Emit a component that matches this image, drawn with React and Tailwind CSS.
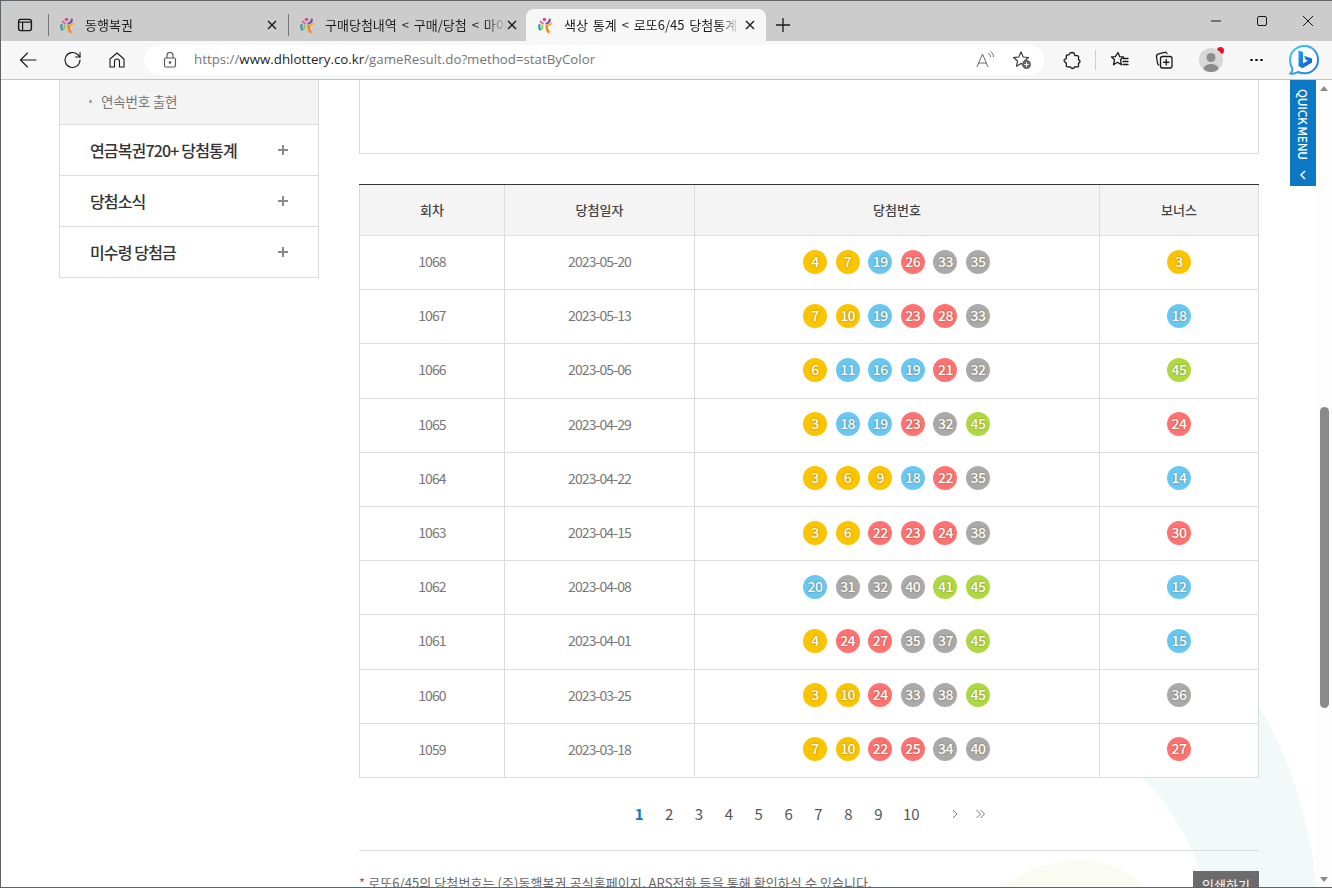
const KR = "font-['Noto_Sans_CJK_KR','Noto_Sans',sans-serif]";

const rows = [
  [1068, "2023-05-20", [4, 7, 19, 26, 33, 35], 3],
  [1067, "2023-05-13", [7, 10, 19, 23, 28, 33], 18],
  [1066, "2023-05-06", [6, 11, 16, 19, 21, 32], 45],
  [1065, "2023-04-29", [3, 18, 19, 23, 32, 45], 24],
  [1064, "2023-04-22", [3, 6, 9, 18, 22, 35], 14],
  [1063, "2023-04-15", [3, 6, 22, 23, 24, 38], 30],
  [1062, "2023-04-08", [20, 31, 32, 40, 41, 45], 12],
  [1061, "2023-04-01", [4, 24, 27, 35, 37, 45], 15],
  [1060, "2023-03-25", [3, 10, 24, 33, 38, 45], 36],
  [1059, "2023-03-18", [7, 10, 22, 25, 34, 40], 27],
];

function ballColor(n) {
  if (n <= 10) return "bg-[#fbc400]";
  if (n <= 20) return "bg-[#69c8f2]";
  if (n <= 30) return "bg-[#ff7272]";
  if (n <= 40) return "bg-[#aaaaaa]";
  return "bg-[#b0d840]";
}

function Ball({ n }) {
  return (
    <span className={`flex h-6 w-6 items-center justify-center rounded-full pb-px text-[14px] font-medium tracking-[-0.5px] text-white [text-shadow:0_0_2px_rgba(73,57,0,.6)] ${ballColor(n)}`}>
      {n}
    </span>
  );
}

function Favicon() {
  return (
    <svg width="18" height="18" viewBox="0 0 18 18" fill="none" strokeLinecap="round" className="shrink-0">
      <circle cx="7.500" cy="3.500" r="1.800" fill="#e8468f" />
      <path d="M3.500 5.500C4.500 6.500 5 7 6 7.500" stroke="#ec5fa0" strokeWidth="1.800" />
      <path d="M2.500 9C1.800 10.500 2 12 3 13.500" stroke="#18a79c" strokeWidth="2.200" />
      <path d="M5.200 9.500C5.800 10.500 5.500 12 4.800 13" stroke="#8cc63f" strokeWidth="1.800" />
      <path d="M12.800 3.500C12.800 5.500 11.500 7 9.500 7.500" stroke="#7d4fb5" strokeWidth="2.200" />
      <path d="M14.500 7.500C13.500 8.500 12.500 9 11 9.500" stroke="#fbb81c" strokeWidth="2" />
      <path d="M9.500 10C9.500 12 10 14 11.500 16" stroke="#f58220" strokeWidth="2.300" />
    </svg>
  );
}

function TabClose() {
  return (
    <svg width="10" height="10" viewBox="0 0 10 10" stroke="#1a1a1a" strokeWidth="1.4" className="shrink-0">
      <path d="M1 1l8 8M9 1l-8 8" />
    </svg>
  );
}

function Tab({ title, active, className, textClass }) {
  return (
    <div className={`flex h-[32px] items-center ${className} ${active ? "rounded-t-lg bg-[#f7f7f7]" : ""}`}>
      <Favicon />
      <div className={`overflow-hidden whitespace-nowrap text-[13px] text-[#1f1f1f] [word-spacing:2px] [mask-image:linear-gradient(to_right,black_88%,transparent)] ${textClass}`}>{title}</div>
      <div className="ml-auto"><TabClose /></div>
    </div>
  );
}

function Icon({ children, w = 20, className = "" }) {
  return (
    <svg width={w} height={w} viewBox="0 0 20 20" fill="none" stroke="#1a1a1a" strokeWidth="1.100" strokeLinecap="round" strokeLinejoin="round" className={`shrink-0 ${className}`}>
      {children}
    </svg>
  );
}

function BingIcon() {
  return (
    <svg width="32" height="34" viewBox="0 0 32 34" fill="none">
      <defs>
        <linearGradient id="bingB" x1="0" y1="0" x2="1" y2="1">
          <stop offset="0" stopColor="#1fa9e8" />
          <stop offset="1" stopColor="#1450c8" />
        </linearGradient>
        <linearGradient id="bingRing" x1="0" y1="0" x2="1" y2="1">
          <stop offset="0" stopColor="#3fd0f5" />
          <stop offset="1" stopColor="#1f6fe0" />
        </linearGradient>
      </defs>
      <path d="M16.500 2C8.500 2 2 8 2 16c0 3 .8 6 2.500 9 .2 1.500-.6 3-2 4.500 3.500.5 6-.5 7.500-1.500 2 .9 4 1.300 6.500 1.300 7.800 0 13.500-6 13.500-13.500S24.500 2 16.500 2z" fill="#fff" stroke="url(#bingRing)" strokeWidth="2" />
      <path d="M10.500 6.500l4.500 1.600v11.400l4.800-2.800-2.300-1.100-1.500-3.800 8 2.800v4l-9.500 5.700-4-2.300V6.500z" fill="url(#bingB)" />
    </svg>
  );
}

function BrowserChrome() {
  return (
    <div className="shrink-0">
      <div className="flex h-[40px] items-end bg-[#cccccc]">
        <div className="flex h-[32px] w-[48px] items-center justify-between pl-[16px]">
          <Icon w={16}>
            <rect x="2" y="3" width="16" height="14" rx="2.500" strokeWidth="1.800" />
            <path d="M2 6.500h16M7 6.500V17" strokeWidth="1.500" />
          </Icon>
          <div className="h-[22px] w-px bg-[#777777]" />
        </div>
        <Tab title="동행복권" className="w-[239px] pl-[10px] pr-[11px]" textClass="ml-[8px] w-[170px]" />
        <div className="mb-[5px] h-[22px] w-px self-end bg-[#777777]" />
        <Tab title="구매당첨내역 < 구매/당첨 < 마이페이지" className="w-[237px] pl-[10px] pr-[9px]" textClass="ml-[8px] w-[183px]" />
        <Tab title="색상 통계 < 로또6/45 당첨통계 < 당첨결과" active className="w-[240px] pl-[11px] pr-[11px]" textClass="ml-[9px] w-[176px]" />
        <div className="ml-[9px] flex h-[32px] w-[16px] items-center justify-center">
          <svg width="16" height="16" viewBox="0 0 16 16" stroke="#1a1a1a" strokeWidth="1.300"><path d="M8 1v14M1 8h14" /></svg>
        </div>
        <div className="ml-auto flex h-full items-center gap-[34px] pr-[18px]">
          <svg width="12" height="12" viewBox="0 0 12 12" stroke="#1a1a1a" strokeWidth="1"><path d="M1 6h10" /></svg>
          <svg width="12" height="12" viewBox="0 0 12 12" fill="none" stroke="#1a1a1a" strokeWidth="1"><rect x="1.500" y="1.500" width="9" height="9" rx="1.500" /></svg>
          <svg width="12" height="12" viewBox="0 0 12 12" stroke="#1a1a1a" strokeWidth="1"><path d="M1 1l10 10M11 1L1 11" /></svg>
        </div>
      </div>
      <div className="flex h-[39px] items-center border-b border-[#c4c4c4] bg-[#f7f7f7]">
        <div className="ml-[17px] flex w-[126px] items-center gap-[25px]">
          <Icon><path d="M18 10H2.500M9.500 3l-7 7 7 7" /></Icon>
          <Icon>
            <path d="M17 10a7.500 7.500 0 1 1-2.400-5.500L17 7" />
            <path d="M17 2.500V7h-4.500" />
          </Icon>
          <Icon className="-ml-[1px]"><path d="M3 9l7-6 7 6v8h-4.500v-5.500a2.500 2.500 0 0 0-5 0V17H3z" /></Icon>
        </div>
        <div className="flex h-[30px] w-[900px] items-center rounded-full bg-white pl-[19px]">
          <svg width="14" height="16" viewBox="0 0 14 16" fill="none" stroke="#555" strokeWidth="1.100" className="shrink-0">
            <rect x="1.500" y="6" width="11" height="9" rx="1.500" />
            <path d="M4 6V3.500a3 3 0 0 1 6 0V6" />
            <circle cx="7" cy="10.500" r=".8" fill="#555" />
          </svg>
          <div className="ml-[17px] whitespace-nowrap font-['Open_Sans',sans-serif] text-[13.3px] text-[#767676]">
            https://<span className="text-[#1f1f1f]">www.dhlottery.co.kr</span>/gameResult.do?method=statByColor
          </div>
          <div className="ml-auto mr-[12px] flex items-center gap-[17px]">
            <svg width="20" height="20" viewBox="0 0 20 20" fill="none" stroke="#666" strokeWidth="1">
              <path d="M2 17L7.500 4 13 17M4 13h7" />
              <path d="M13 3c1.500 1 2.500 2 2.500 4M15.500 1.500c2 1.500 3 3 3 5.500" />
            </svg>
            <svg width="20" height="20" viewBox="0 0 20 20" fill="none">
              <path d="M9 2l2.200 5 5.300.5-4 3.500 1 5.200L9 13.500 4.500 16.200l1-5.200-4-3.500L6.800 7z" stroke="#333" strokeWidth="1.100" strokeLinejoin="round" />
              <circle cx="14.500" cy="14.500" r="4.500" fill="#666" />
              <path d="M14.500 12.300v4.400M12.300 14.500h4.400" stroke="#fff" strokeWidth="1.100" />
            </svg>
          </div>
        </div>
        <div className="ml-[18px] flex items-center">
          <Icon>
            <path strokeWidth="1.300" d="M7.500 4C8 2 12 2 12.500 4c.2.800 0 1.200.3 1.500.8.500 3.200-.3 3.700.7.500 1-.3 2.800 0 3.500.6.600 1.500.5 1.500 1.800s-1 1.300-1.500 1.800c-.3.800.5 2.500-.2 3.200-.8.800-2.500 0-3.300.3-.8.500-.7 1.700-2.500 1.700s-1.700-1.200-2.500-1.700c-.8-.3-2.800.5-3.500-.2-.6-.7.200-2.500-.2-3.200C3.700 12 2 12 2 10.500S3.700 9 4.300 8.500c.4-.7-.4-2.500.2-3.200C5.200 4.700 7 5.500 7.500 4z" />
          </Icon>
          <div className="ml-[13px] h-[20px] w-px bg-[#d0d0d0]" />
          <Icon className="ml-[14px]">
            <path strokeWidth="1.300" d="M8 2.500l1.700 4.200 3.800.3-3 2.800.9 5-3.900-2.500-4 2.500 1-5-3-2.800 3.800-.3z" />
            <path strokeWidth="1.300" d="M13.500 8.500H18M13 11.500h5M13 14.500h5" />
          </Icon>
          <Icon className="ml-[24px]">
            <path strokeWidth="1.300" d="M13 3.500c-.5-1-1.500-1.500-2.500-1.200l-6 1.500C3 4.300 2.300 5.500 2.500 7l1 6c.1.800.5 1.500 1.300 2" />
            <rect x="6.500" y="6.500" width="11.500" height="11.500" rx="2" strokeWidth="1.300" />
            <path strokeWidth="1.300" d="M12.250 9.500v5.500M9.500 12.250H15" />
          </Icon>
          <div className="relative ml-[25px] flex h-6 w-6 items-center justify-center overflow-hidden rounded-full bg-[#d8d8d8]">
            <svg width="24" height="24" viewBox="0 0 24 24" fill="#8c8c8c"><circle cx="12" cy="9.500" r="4.500" /><ellipse cx="12" cy="21" rx="7.500" ry="5" /></svg>
          </div>
          <div className="-ml-[6px] -mt-[20px] h-[7px] w-[7px] rounded-full bg-[#e81123]" />
          <div className="ml-[26px] flex w-[14px] items-center gap-[2px]">
            <span className="h-[2px] w-[3px] rounded-full bg-[#1a1a1a]" />
            <span className="h-[2px] w-[3px] rounded-full bg-[#1a1a1a]" />
            <span className="h-[2px] w-[3px] rounded-full bg-[#1a1a1a]" />
          </div>
          <div className="ml-[24px] mt-[2px]"><BingIcon /></div>
        </div>
      </div>
    </div>
  );
}

function Sidebar() {
  const items = ["연금복권720+ 당첨통계", "당첨소식", "미수령 당첨금"];
  return (
    <aside className="ml-[58px] w-[260px] shrink-0">
      <div className="border-x border-b border-[#dcdcdc]">
        <div className="flex h-[44px] items-center bg-[#f4f4f4] pb-px pl-[29px] text-[13.5px] tracking-[-0.2px] text-[#777777]">
          <span className="mr-[9px] h-[3px] w-[3px] bg-[#aaaaaa]" />
          연속번호 출현
        </div>
        {items.map((label) => (
          <div key={label} className="flex h-[51px] items-center justify-between border-t border-[#dcdcdc] px-[30px] text-[16px] font-medium tracking-[-0.85px] text-[#333333]">
            <span className="-mt-px">{label}</span>
            <svg width="10" height="10" viewBox="0 0 10 10" stroke="#8a8a8a" strokeWidth="2"><path d="M5 0v10M0 5h10" /></svg>
          </div>
        ))}
      </div>
    </aside>
  );
}

const cols = "grid grid-cols-[145px_190px_405px_1fr]";

function ResultTable() {
  return (
    <div className="mt-[30px] border-t border-[#333333] bg-white">
      <div className={`${cols} h-[51px] border-x border-b border-[#dcdcdc] bg-[#f4f4f4] text-[13px] font-medium text-[#444444]`}>
        {["회차", "당첨일자", "당첨번호", "보너스"].map((h, i) => (
          <div key={h} className={`flex items-center justify-center pb-px ${i < 3 ? "border-r border-[#dcdcdc]" : ""}`}>{h}</div>
        ))}
      </div>
      {rows.map(([round, date, nums, bonus]) => (
        <div key={round} className={`${cols} h-[54.2px] border-x border-b border-[#dcdcdc] text-[14px] tracking-[-0.9px] text-[#777777]`}>
          <div className="flex items-center justify-center border-r border-[#dcdcdc] pb-[2px]">{round}</div>
          <div className="flex items-center justify-center border-r border-[#dcdcdc] pb-[2px]">{date}</div>
          <div className="flex items-center justify-center gap-[8.6px] border-r border-[#dcdcdc] pb-[2px] pr-px">
            {nums.map((n, i) => <Ball key={i} n={n} />)}
          </div>
          <div className="flex items-center justify-center pb-[2px]"><Ball n={bonus} /></div>
        </div>
      ))}
    </div>
  );
}

function Pagination() {
  const pages = [1, 2, 3, 4, 5, 6, 7, 8, 9];
  return (
    <div className="flex h-[72px] items-center justify-center pr-[8px] text-[15px] text-[#555555]">
      {pages.map((p) => (
        <span key={p} className={`w-[29.9px] text-center ${p === 1 ? "font-bold text-[#0b78c3]" : ""}`}>{p}</span>
      ))}
      <span className="w-[36px] text-center">10</span>
      <svg width="8" height="10" viewBox="0 0 8 10" fill="none" stroke="#777" className="ml-[22px] mt-px"><path d="M2 1l4 4-4 4" /></svg>
      <svg width="11" height="10" viewBox="0 0 11 10" fill="none" stroke="#777" className="ml-[15.5px] mt-px"><path d="M1.500 1l4 4-4 4M5.500 1l4 4-4 4" /></svg>
    </div>
  );
}

export default function App() {
  return (
    <div className={`flex h-[888px] w-[1332px] flex-col overflow-hidden border-y border-l border-[#5f6368] ${KR}`}>
      <BrowserChrome />
      <div className="flex min-h-0 flex-1">
        <div className="relative flex min-w-0 flex-1 overflow-hidden bg-white">
          {/* background shapes behind the page */}
          <svg className="absolute left-0 top-0" width="1315" height="808" viewBox="0 80 1315 808" fill="none">
            <path d="M1000 888C1030 865 1060 860 1080 860C1105 860 1130 872 1146 888z" fill="#fafbf3" />
            <path d="M1140 777C1170 805 1192 845 1205 888H1315C1310 820 1285 750 1259 708L1240 690L1140 690z" fill="#f2faf9" />
          </svg>
          <div className="relative flex flex-1">
            <Sidebar />
            <main className="ml-[40px] w-[900px] shrink-0">
              <div className="h-[74px] border-x border-b border-[#dcdcdc] bg-white" />
              <ResultTable />
              <Pagination />
              <div className="border-t border-[#dcdcdc] pt-[20px]">
                <div className="flex items-start justify-between">
                  <p className="mt-[2px] text-[13px] tracking-[0.08px] text-[#666666]">
                    <span className="text-[#e8442a]">*</span> 로또6/45의 당첨번호는 (주)동행복권 공식홈페이지, ARS전화 등을 통해 확인하실 수 있습니다.
                  </p>
                  <div className="flex h-[28px] w-[66px] items-center justify-center bg-[#6b6b6b] text-[13px] text-white">인쇄하기</div>
                </div>
              </div>
            </main>
          </div>
          <div className="absolute right-0 top-0 flex h-[106px] w-[26px] flex-col items-center bg-[#0b78c3] pt-[9px] text-white">
            <span className="text-[12px] font-medium leading-[26px] tracking-[-0.3px] [word-spacing:-1px] [writing-mode:vertical-rl]">QUICK MENU</span>
            <svg width="8" height="10" viewBox="0 0 8 10" fill="none" stroke="#fff" strokeWidth="1.500" className="mt-[10px]"><path d="M6 1L2 5l4 4" /></svg>
          </div>
        </div>
        {/* scrollbar */}
        <div className="flex w-[16px] shrink-0 flex-col items-center bg-[#fdfdfd] pt-[6px]">
          <span className="h-0 w-0 border-x-[4px] border-b-[5px] border-x-transparent border-b-[#8a8a8a]" />
          <div className="mt-[316px] h-[301px] w-[9px] rounded-full bg-[#8a8a8a]" />
          <span className="mt-[169px] h-0 w-0 border-x-[4px] border-t-[5px] border-x-transparent border-t-[#8a8a8a]" />
        </div>
      </div>
    </div>
  );
}
